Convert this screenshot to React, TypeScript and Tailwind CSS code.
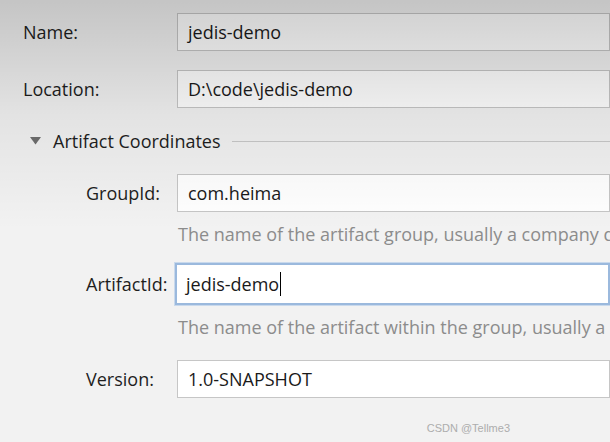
const font = { fontFamily: '"Open Sans", "Noto Sans", sans-serif' };

function Field({ value, focused }: { value: string; focused?: boolean }) {
  return (
    <div
      className={
        focused
          ? 'flex h-[42px] flex-1 items-center border-2 border-[#9bb9dd] bg-white pl-[9px] shadow-[0_0_0_1px_#c9d9ec] text-[18px] text-[#1a1a1a]'
          : 'flex h-[38px] flex-1 items-center border border-[#c6c6c6] bg-white pl-[10px] text-[18px] text-[#1a1a1a]'
      }
    >
      <span>{value}</span>
      {focused && <span className="ml-px h-[24px] w-px bg-black" />}
    </div>
  );
}

export default function App() {
  return (
    <div className="relative h-[442px] w-[610px] overflow-hidden bg-[#f2f2f2]" style={font}>
      <div className="flex flex-col pt-[13px] text-[18px] text-[#1e1e1e]">
        <div className="flex items-center">
          <span className="w-[177px] pl-[23px]">Name:</span>
          <Field value="jedis-demo" />
        </div>
        <div className="mt-[19px] flex items-center">
          <span className="w-[177px] pl-[23px]">Location:</span>
          <Field value="D:\code\jedis-demo" />
        </div>

        <div className="mt-[19px] flex h-[28px] items-center">
          <svg width="11" height="8" viewBox="0 0 11 8" className="ml-[30px] mr-[12px]">
            <path d="M0 0 H11 L5.5 7.5 Z" fill="#6e6e6e" />
          </svg>
          <span>Artifact Coordinates</span>
          <div className="ml-[11px] h-px flex-1 bg-[#c9c9c9]" />
        </div>

        <div className="mt-[19px] flex items-center">
          <span className="w-[177px] pl-[86px]">GroupId:</span>
          <Field value="com.heima" />
        </div>
        <div className="ml-[178px] mt-[10px] whitespace-nowrap text-[18px] leading-[24px] text-[#8c8c8c]">
          The name of the artifact group, usually a company domain
        </div>

        <div className="mt-[17px] flex items-center">
          <span className="w-[175px] pl-[86px]">ArtifactId:</span>
          <Field value="jedis-demo" focused />
        </div>
        <div className="ml-[178px] mt-[10px] whitespace-nowrap text-[18px] leading-[24px] text-[#8c8c8c]">
          The name of the artifact within the group, usually a project name
        </div>

        <div className="mt-[21px] flex items-center">
          <span className="w-[177px] pl-[86px]">Version:</span>
          <Field value="1.0-SNAPSHOT" />
        </div>
      </div>

      <div
        className="absolute right-[100px] top-[420px] text-[11px] text-[#adadad]"
        style={{ fontFamily: '"Liberation Sans", Arial, sans-serif' }}
      >
        CSDN @Tellme3
      </div>

      <div className="pointer-events-none absolute inset-x-0 top-0 h-[230px] bg-gradient-to-b from-[#00000030] via-[#00000010] to-transparent" />
    </div>
  );
}
